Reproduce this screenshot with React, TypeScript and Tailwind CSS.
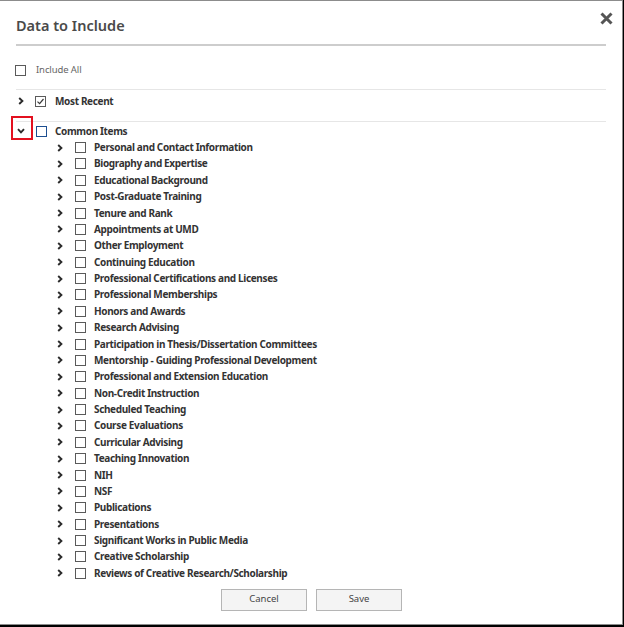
const children = [
  "Personal and Contact Information",
  "Biography and Expertise",
  "Educational Background",
  "Post-Graduate Training",
  "Tenure and Rank",
  "Appointments at UMD",
  "Other Employment",
  "Continuing Education",
  "Professional Certifications and Licenses",
  "Professional Memberships",
  "Honors and Awards",
  "Research Advising",
  "Participation in Thesis/Dissertation Committees",
  "Mentorship - Guiding Professional Development",
  "Professional and Extension Education",
  "Non-Credit Instruction",
  "Scheduled Teaching",
  "Course Evaluations",
  "Curricular Advising",
  "Teaching Innovation",
  "NIH",
  "NSF",
  "Publications",
  "Presentations",
  "Significant Works in Public Media",
  "Creative Scholarship",
  "Reviews of Creative Research/Scholarship",
]

function ChevronRight() {
  return (
    <svg width="6" height="8" viewBox="0 0 6 8" className="shrink-0">
      <path d="M1.2 1 L4.4 4 L1.2 7" fill="none" stroke="#2b2b2b" strokeWidth="1.9" />
    </svg>
  )
}

function ChevronDown() {
  return (
    <svg width="8" height="6" viewBox="0 0 8 6" className="shrink-0">
      <path d="M1 1.2 L4 4.4 L7 1.2" fill="none" stroke="#2b2b2b" strokeWidth="1.9" />
    </svg>
  )
}

function Box({ checked = false, blue = false }: { checked?: boolean; blue?: boolean }) {
  return (
    <span
      className={`w-[11px] h-[11px] shrink-0 flex items-center justify-center bg-white border ${
        blue ? "border-[#1d4f91] border-[1.5px]" : "border-[#5a5a5a]"
      }`}
    >
      {checked && (
        <svg width="9" height="9" viewBox="0 0 9 9">
          <path d="M1.5 4.6 L3.6 6.6 L7.5 2" fill="none" stroke="#3a3a3a" strokeWidth="1.2" />
        </svg>
      )}
    </span>
  )
}

export default function App() {
  return (
    <div className="w-[624px] h-[627px] bg-black overflow-hidden font-['Noto_Sans',sans-serif]">
      <div className="relative w-[623px] h-[625px] bg-white border-t border-r border-b border-[#8c8c8c] flex flex-col">
        {/* Header */}
        <div className="h-[43px] pl-[16px] pt-[14px]">
          <h2 className="text-[14.5px] leading-[20px] font-semibold text-[#4a4a4a]">Data to Include</h2>
        </div>
        <button className="absolute top-[10px] right-[9px] w-[14px] h-[14px] flex items-center justify-center">
          <svg width="13" height="13" viewBox="0 0 13 13">
            <path d="M1.5 1.5 L11.5 11.5 M11.5 1.5 L1.5 11.5" stroke="#555" strokeWidth="3" />
          </svg>
        </button>
        <div className="mx-[16px] h-[2px] bg-[#cdcdcd]" />

        {/* Include all */}
        <div className="mt-[17px] h-[14px] pl-[15px] flex items-center gap-[10px]">
          <Box />
          <span className="text-[9.5px] tracking-[-0.1px] text-[#666]">Include All</span>
        </div>
        <div className="mt-[12px] mx-[16px] h-px bg-[#e6e6e6]" />

        {/* Most recent */}
        <div className="h-[22px] pl-[18px] flex items-center">
          <ChevronRight />
          <span className="ml-[11px]">
            <Box checked />
          </span>
          <span className="ml-[9px] text-[10px] font-bold tracking-[-0.35px] text-[#333]">Most Recent</span>
        </div>
        <div className="mt-[9px] mx-[16px] h-px bg-[#e6e6e6]" />

        {/* Common items */}
        <div className="mt-[1px] h-[16.4px] pl-[17px] flex items-center">
          <span className="relative flex items-center">
            <ChevronDown />
            <span className="absolute left-[-6px] top-[-12px] w-[22px] h-[24px] border-[2.5px] border-[#e3101f]" />
          </span>
          <span className="ml-[11px]">
            <Box blue />
          </span>
          <span className="ml-[8px] text-[10px] font-bold tracking-[-0.35px] text-[#333]">Common Items</span>
        </div>
        <div className="flex flex-col">
          {children.map((c) => (
            <div key={c} className="h-[16.38px] pl-[57px] flex items-center">
              <ChevronRight />
              <span className="ml-[12px]">
                <Box />
              </span>
              <span className="ml-[8px] text-[10px] font-bold tracking-[-0.35px] text-[#333] whitespace-nowrap">
                {c}
              </span>
            </div>
          ))}
        </div>

        {/* Footer */}
        <div className="mt-[7px] flex justify-center gap-[9px] pl-[1px]">
          <button className="w-[86px] h-[22px] bg-[#f4f4f4] border border-[#b5b5b5] text-[9.5px] text-[#444]">
            Cancel
          </button>
          <button className="w-[86px] h-[22px] bg-[#f4f4f4] border border-[#b5b5b5] text-[9.5px] text-[#444]">
            Save
          </button>
        </div>
      </div>
      <div className="ml-[68px] -mt-[2px] w-[32px] h-[2px] bg-[#333]" />
    </div>
  )
}
